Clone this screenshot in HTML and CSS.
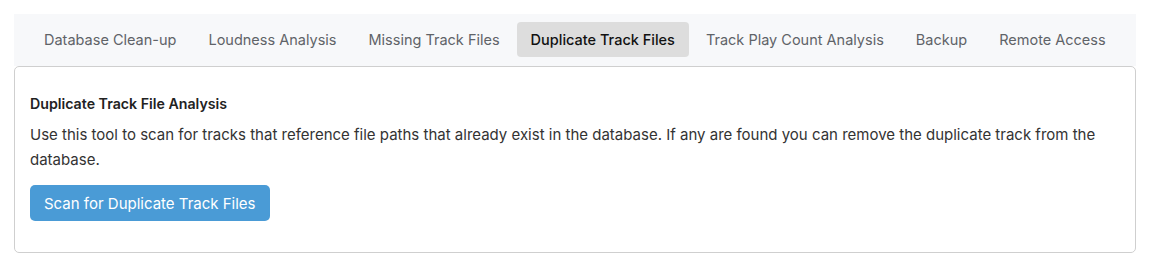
FILE: index.html
```html
<!DOCTYPE html>
<html lang="en">

<head>
    <meta charset="UTF-8">
    <meta name="viewport" content="width=device-width, initial-scale=1.0">
    <title>Maintenance Tools</title>
    <link rel="stylesheet" href="styles.css">
</head>

<body>
    <div class="page">
        <ul class="tabs">
            <li class="tab">Database Clean-up</li>
            <li class="tab">Loudness Analysis</li>
            <li class="tab">Missing Track Files</li>
            <li class="tab active">Duplicate Track Files</li>
            <li class="tab">Track Play Count Analysis</li>
            <li class="tab">Backup</li>
            <li class="tab">Remote Access</li>
        </ul>
        <div class="panel">
            <h4>Duplicate Track File Analysis</h4>
            <p>Use this tool to scan for tracks that reference file paths that already exist in the database. If any are found you can remove the duplicate track from the database.</p>
            <button type="button" class="scan-btn">Scan for Duplicate Track Files</button>
        </div>
    </div>
</body>

</html>
```

FILE: styles.css
```css
body {
    margin: 0;
    background-color: #fff;
    font-family: Inter, "Noto Sans", sans-serif;
}

.page {
    padding: 14px 14px 0 14px;
}

.tabs {
    display: flex;
    list-style: none;
    margin: 0;
    padding: 8px 15px 9px 15px;
    gap: 2px;
    background-color: #f7f8fa;
}

.tab {
    flex-shrink: 0;
    white-space: nowrap;
    padding: 0 15px;
    height: 35px;
    line-height: 35px;
    font-size: 14.5px;
    color: #5f6368;
    border-radius: 4px;
}

.tab.active {
    padding: 0 14px;
    background-color: #dddddd;
    color: #111;
    font-weight: 500;
}

.panel {
    border: 1px solid #cfcfcf;
    border-radius: 5px;
    padding: 28px 15px 29px 15px;
    min-height: 128px;
}

.panel h4 {
    margin: 0 0 10px 0;
    font-size: 14.2px;
    font-weight: 600;
    color: #222;
}

.panel p {
    margin: 0 0 13px 0;
    font-size: 15px;
    line-height: 25px;
    color: #333;
}

.scan-btn {
    padding: 0 14px;
    height: 36px;
    background-color: #4a9bd6;
    color: white;
    border: none;
    border-radius: 5px;
    font-family: inherit;
    font-size: 15px;
}
```
